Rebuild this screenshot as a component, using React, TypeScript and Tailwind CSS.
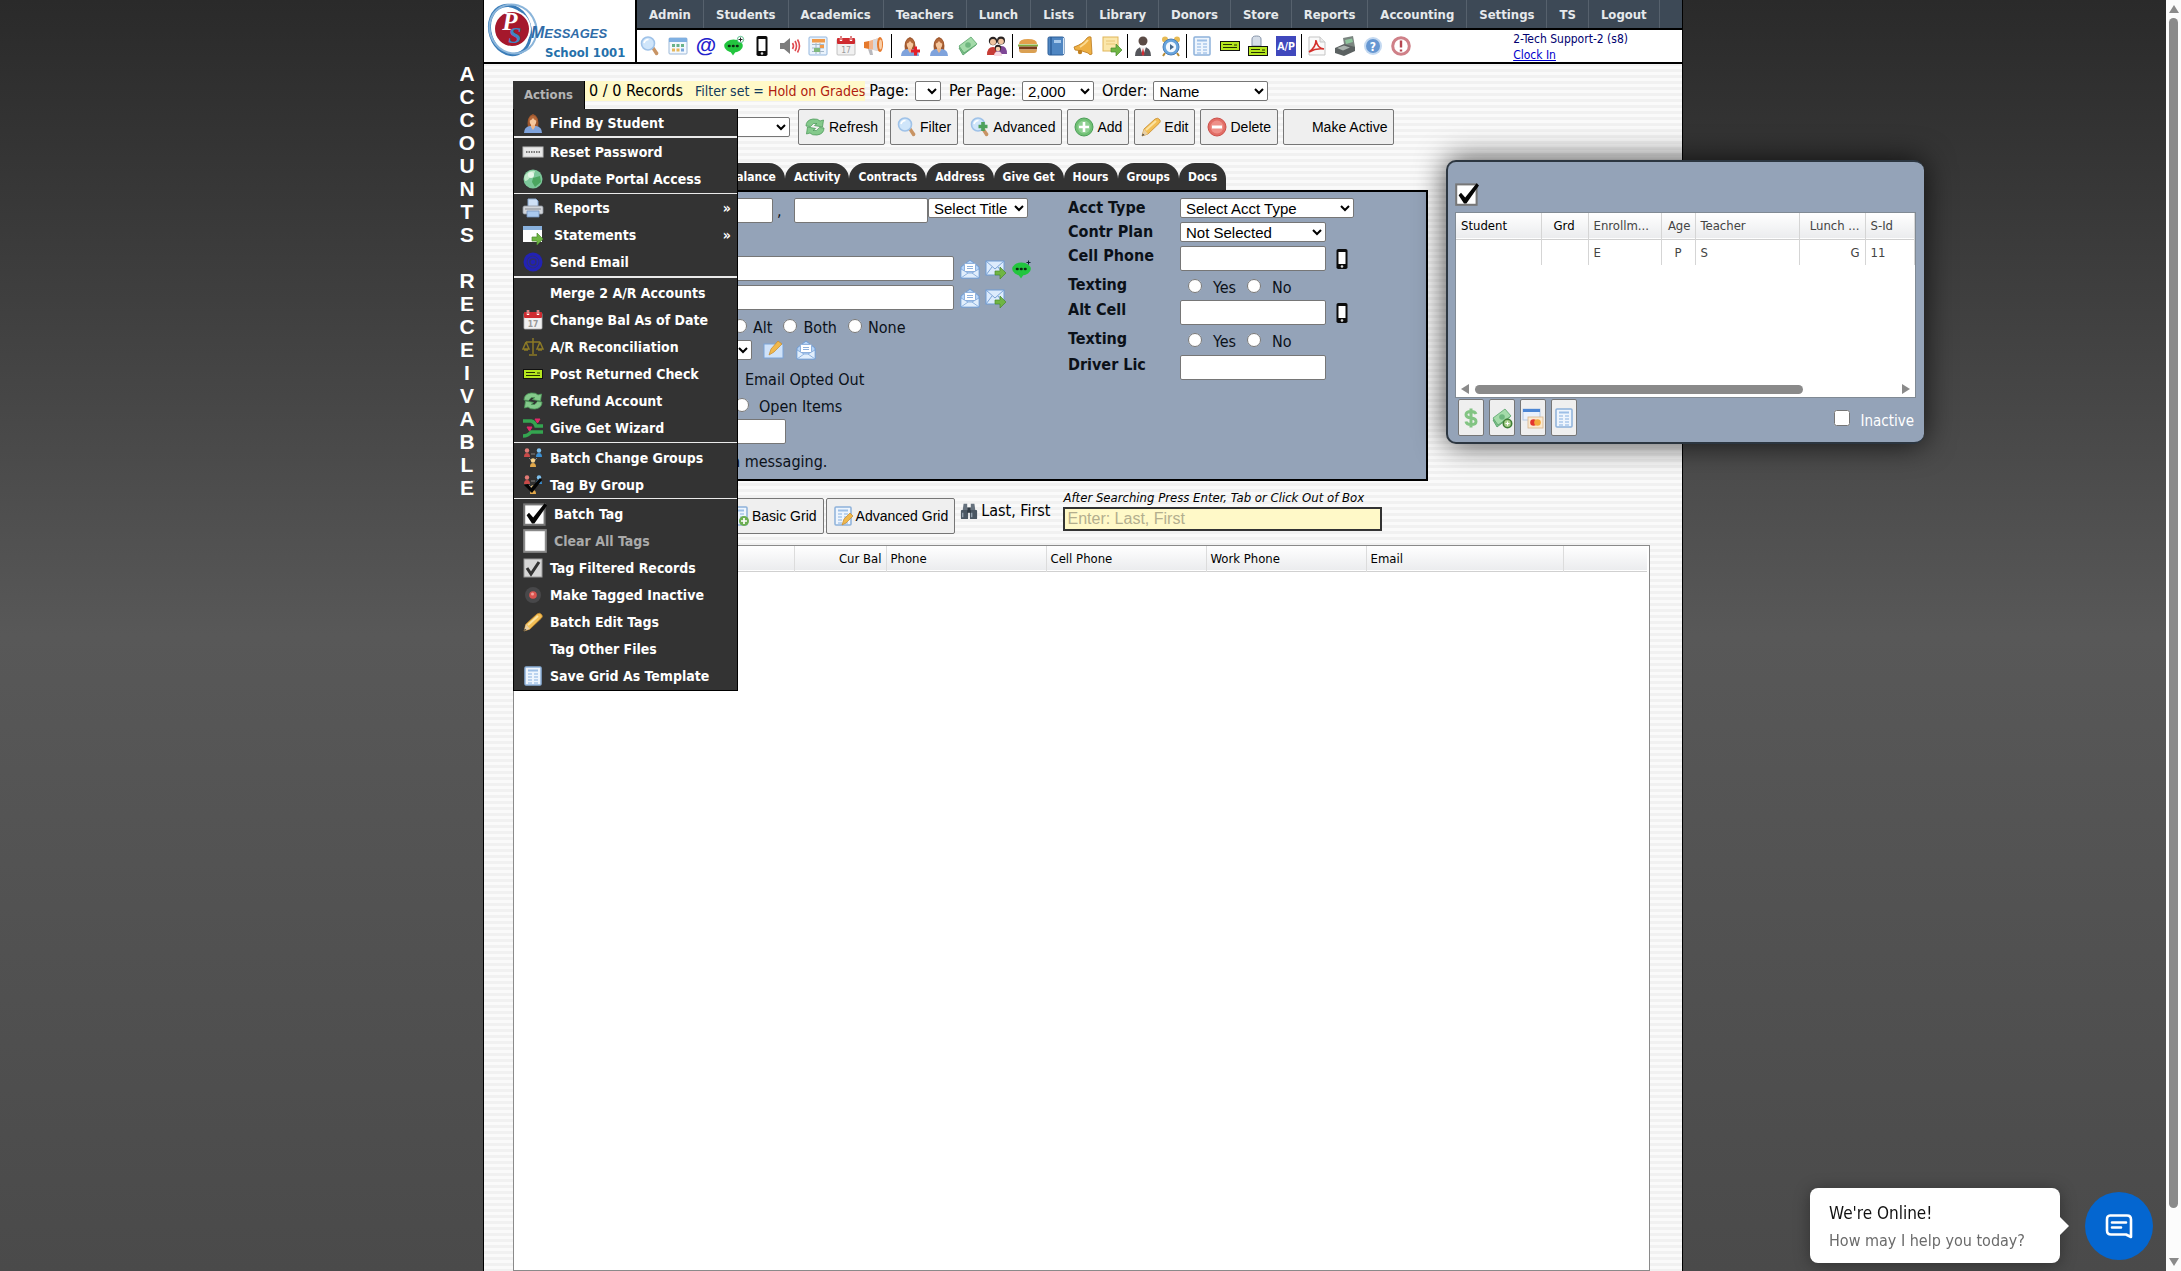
import * as React from "react"
import clsx from "clsx"

const person = (
  <>
    <path d="M5 16Q3 3 10 1Q17 3 15 16Z" fill="#a0582e" />
    <path d="M1 20Q1 14 7 13H13Q19 14 19 20Z" fill="#7fa3dc" />
    <path d="M8 11H12V14L10 17L8 14Z" fill="#f0b88a" />
    <ellipse cx="10" cy="8" rx="3.3" ry="4.2" fill="#f6c79d" />
    <path d="M6 8Q6 3 10 3Q14 3 14 8Q11 7 10 5Q9 7 6 8Z" fill="#b4683a" />
  </>
)

const sheet = (
  <>
    <rect x="2" y="1" width="16" height="18" rx="1" fill="#eef5fd" stroke="#8db1da" strokeWidth="1.5" />
    <path d="M5 4.5H15" stroke="#9dbfe6" strokeWidth="2" />
    <path d="M5 8H9M11 8H15M5 11H9M11 11H15M5 14H9M11 14H15M5 17H9M11 17H15" stroke="#abc8ea" strokeWidth="1.6" />
  </>
)

const calendarGrid = (
  <>
    <rect x="1" y="2" width="18" height="16" rx="1" fill="#f3f8fd" stroke="#9db9d8" />
    <rect x="1" y="2" width="18" height="4" fill="#7fb0e2" />
  </>
)

const arrow = <path d="M9 12H14V8L20 14L14 20V16H9Z" fill="#6fb544" stroke="#4a8a2c" strokeWidth=".7" />

const check = (
  <>
    <rect x="0" y="5" width="20" height="10" fill="#111" />
    <rect x="1" y="6" width="18" height="8" fill="#b4e61e" />
    <path d="M3 8.500H12M3 11.500H17M14 9H17" stroke="#243000" strokeWidth="1.200" />
  </>
)

const envelopeOpen = (
  <>
    <path d="M1 8L10 1L19 8V19H1Z" fill="#b6d3f5" stroke="#6f9bd3" />
    <rect x="4.5" y="4.5" width="11" height="8" rx="1" fill="#fff" stroke="#8fb1dd" />
    <path d="M7 7.5H13M7 9.5H13" stroke="#8fb1dd" />
    <path d="M1 10L8 14H12L19 10V19H1Z" fill="#e1eefc" stroke="#7ba4d8" strokeWidth=".8" />
    <path d="M1 19L8 14M19 19L12 14" stroke="#7ba4d8" strokeWidth=".8" />
  </>
)

const pencil = (
  <>
    <path d="M1 19L3 12L14 2Q17 0 19 3Q20 5 18 6.500L7 17Z" fill="#f3bf55" stroke="#c68a2c" strokeWidth=".8" />
    <path d="M5 13L15 4" stroke="#fbe3a2" strokeWidth="2" />
    <path d="M1 19L3 12L7 17Z" fill="#e8cfa4" />
    <path d="M1 19L1.700 16.500L3.500 18Z" fill="#444" />
  </>
)

const refresh = (
  <>
    <path d="M1 9Q1 3 8 2Q13 1.500 15 4L18.500 3L17.500 10L9.500 8.500L12 6.500Q8 5 5.500 9.500Z" fill="#84c98b" stroke="#4e9c5b" strokeWidth=".8" />
    <path d="M19 11Q19 17 12 18Q7 18.500 5 16L1.500 17L2.500 10L10.500 11.500L8 13.500Q12 15 14.500 10.500Z" fill="#84c98b" stroke="#4e9c5b" strokeWidth=".8" />
  </>
)

const lens = (
  <>
    <path d="M11 12L14 10.500L18.500 17Q18 20 15.500 19Z" fill="#c89464" />
    <circle cx="8" cy="7.500" r="6.500" fill="#cfe5fa" stroke="#9fc2e8" strokeWidth="1.600" />
    <path d="M4 7Q5 3.500 8.500 3.500" stroke="#fff" strokeWidth="1.600" fill="none" />
  </>
)

const calendar17 = (
  <>
    <rect x="1" y="3" width="18" height="16" rx="1" fill="#f1f1f1" stroke="#b5b5b5" strokeWidth=".8" />
    <rect x="1" y="2" width="18" height="6" rx="1" fill="#cf2b30" />
    <path d="M5 0V5M15 0V5" stroke="#fff" strokeWidth="2.400" />
    <path d="M5 0V4M15 0V4" stroke="#c33" strokeWidth="1.200" />
    <text x="10" y="17" fontSize="8.500" textAnchor="middle" fill="#999">17</text>
  </>
)

const money = (
  <>
    <path d="M1 12L14 3L18 9L5 19Z" fill="#7cc08a" stroke="#4f9a62" strokeWidth=".8" />
    <path d="M1 10L13 1L19 8L6 17Z" fill="#a4dba9" stroke="#5aa56c" strokeWidth=".8" />
    <circle cx="10" cy="9" r="2.800" fill="#6fb77f" />
  </>
)

const groups = (
  <>
    <circle cx="4" cy="2.500" r="2.200" fill="#e27b76" />
    <path d="M1 9Q1 5 4 5Q7 5 7 9Z" fill="#c84a48" />
    <circle cx="16" cy="2.500" r="2.200" fill="#7fc1ee" />
    <path d="M13 9Q13 5 16 5Q19 5 19 9Z" fill="#3a8fd2" />
    <circle cx="10" cy="12.500" r="2.200" fill="#f6d28a" />
    <path d="M7 19Q7 15 10 15Q13 15 13 19Z" fill="#e2a84a" />
    <path d="M6 10L8 12M14 10L12 12M8 6H12" stroke="#8a8a8a" strokeWidth=".9" />
  </>
)

const phone = (
  <>
    <rect x="4.500" y="0" width="11" height="20" rx="1.800" fill="#0c0c0c" />
    <rect x="6.500" y="3" width="7" height="12" fill="#fff" />
    <circle cx="10" cy="17.500" r="1.300" fill="#ddd" />
  </>
)

const chat = (
  <>
    <ellipse cx="9.500" cy="10" rx="9.300" ry="6.500" fill="#22c53e" />
    <path d="M6 15L9 19.500L12 15Z" fill="#22c53e" />
    <path d="M5 10H5.500M9 10H9.500M13 10H13.500" stroke="#0b2a10" strokeWidth="2.600" strokeLinecap="round" />
  </>
)

const tick = <path d="M5 9L8.500 13L18 1L20 3L9.500 18H7.500L3 11Z" fill="#050505" />

const icons: Record<string, React.ReactNode> = {
  person,
  sheet,
  check,
  envelopeOpen,
  pencil,
  refresh,
  lens,
  calendar17,
  money,
  groups,
  phone,
  tiles: (
    <>
      {calendarGrid}
      <path d="M4 9.500H7M8.500 9.500H11.500M13 9.500H16" stroke="#68b28a" strokeWidth="3" />
      <path d="M4 14H7M8.500 14H11.500" stroke="#e5b65b" strokeWidth="3" />
      <path d="M13 14H16" stroke="#7ba8dc" strokeWidth="3" />
    </>
  ),
  at: (
    <text x="10" y="16" fontSize="21" fontWeight="700" textAnchor="middle" fill="#2222cc" className="font-['Liberation_Sans',sans-serif]">@</text>
  ),
  chat: (
    <>
      {chat}
      <circle cx="16.500" cy="3.500" r="3.200" fill="#fff" stroke="#2a6" strokeWidth=".7" />
      <path d="M16.500 1.500V5.500M14.500 3.500H18.500" stroke="#222" />
    </>
  ),
  chatPlain: (
    <>
      {chat}
      <path d="M16.500 1.500V5.500M14.500 3.500H18.500" stroke="#123" />
    </>
  ),
  speaker: (
    <>
      <path d="M0 7H4L10 2V18L4 13H0Z" fill="#7d7d7d" />
      <path d="M12.500 7Q14.500 10 12.500 13M15 5Q18 10 15 15M17.500 3.500Q21.500 10 17.500 16.500" stroke="#e04b50" strokeWidth="1.600" fill="none" />
    </>
  ),
  schedule: (
    <>
      <rect x="1" y="1" width="18" height="18" rx="1" fill="#eaf3fc" stroke="#94b7de" />
      <rect x="4" y="3" width="13" height="3.500" fill="#f09a4a" />
      <path d="M4 8.500H16M4 12H16M4 15.500H16M8 7V18M12 7V18" stroke="#a5b8c9" />
      <rect x="12" y="9" width="4" height="3" fill="#f09a4a" />
      <rect x="6" y="12" width="6" height="4" fill="#7fb97d" />
    </>
  ),
  horn: (
    <>
      <path d="M0 6L5 5V13L0 12Z" fill="#e5792c" />
      <path d="M5 5L15 2V15L5 13Z" fill="#f4b48a" />
      <path d="M9 4L14 2.300V15L9 14Z" fill="#d8d8dc" />
      <ellipse cx="16" cy="8.500" rx="3" ry="7.500" fill="#e5792c" />
      <ellipse cx="16.500" cy="8.500" rx="1.500" ry="5" fill="#f9cfa8" />
      <path d="M4 13L6 19H9L8 13.500Z" fill="#b9b9bd" />
    </>
  ),
  personAdd: (
    <>
      {person}
      <path d="M15.500 10.500V19.500M11 15H20" stroke="#e3202a" strokeWidth="3" />
    </>
  ),
  people: (
    <>
      <circle cx="6" cy="5" r="4.200" fill="#2a2322" />
      <circle cx="6" cy="6" r="3" fill="#f0c5a0" />
      <circle cx="14" cy="4.500" r="4" fill="#2a2322" />
      <circle cx="14" cy="5.500" r="2.800" fill="#f0c5a0" />
      <path d="M0 19Q0 11 6 11Q12 11 12 19Z" fill="#c63c35" />
      <path d="M9 18Q9 10 14.500 10Q20 10 20 18Z" fill="#7e4796" />
      <circle cx="11" cy="12" r="3.200" fill="#2a2322" />
      <circle cx="11" cy="13" r="2.300" fill="#f5cfab" />
      <path d="M7 20Q7 15.500 11 15.500Q15 15.500 15 20Z" fill="#f6d9e2" />
    </>
  ),
  burger: (
    <>
      <path d="M1 8Q1 3 10 3Q19 3 19 8Z" fill="#e2a04c" />
      <path d="M0 9.500H20" stroke="#80ad3c" strokeWidth="2" />
      <path d="M1 12H19" stroke="#7a3c1c" strokeWidth="3" />
      <path d="M1 13.500H19Q19 17 16 17H4Q1 17 1 13.500Z" fill="#daa052" />
    </>
  ),
  book: (
    <>
      <rect x="2" y="1" width="16" height="18" rx="1.500" fill="#4f86c2" stroke="#2d5e98" />
      <path d="M5 1V19" stroke="#2d5e98" strokeWidth="1.500" />
      <rect x="8" y="4" width="7" height="3" fill="#a9caec" />
      <path d="M17.500 2V18" stroke="#d7e6f6" />
    </>
  ),
  bell: (
    <>
      <path d="M0 11Q9 8 13 2Q15 0 17 1L18 18Q16 20 14 17Q7 14 1 14Z" fill="#eeb044" stroke="#b9791d" strokeWidth=".8" />
      <path d="M6 11Q11 8 14 4" stroke="#fbdc94" strokeWidth="2" fill="none" />
      <circle cx="6" cy="16" r="2.200" fill="#c2801f" />
    </>
  ),
  note: (
    <>
      <rect x="1" y="1" width="15" height="14" fill="#fbe7ab" stroke="#e0b65a" />
      <path d="M4 5H13M4 8H13" stroke="#e9c677" />
      {arrow}
    </>
  ),
  manager: (
    <>
      <circle cx="10" cy="5" r="4.500" fill="#5b4b45" />
      <path d="M2 20Q2 11 10 11Q18 11 18 20Z" fill="#55565b" />
      <path d="M7 11H13L10 20Z" fill="#f4f4f4" />
      <path d="M10 12L11.500 18L10 20L8.500 18Z" fill="#d22c33" />
    </>
  ),
  clock: (
    <>
      <circle cx="4" cy="3.500" r="3" fill="#e6ba54" />
      <circle cx="16" cy="3.500" r="3" fill="#e6ba54" />
      <path d="M4 17L2 20M16 17L18 20" stroke="#b58a34" strokeWidth="2" />
      <circle cx="10" cy="11" r="8" fill="#68a4dd" stroke="#4a7fb8" />
      <circle cx="10" cy="11" r="5.200" fill="#f2f8fe" />
      <path d="M9 8V14L13 11Z" fill="#47698c" />
    </>
  ),
  checkPrint: (
    <>
      <path d="M4 10V3Q4 0 8.500 0Q13 0 13 3V10Z" fill="#d5dde8" stroke="#8593a8" />
      <rect x="0" y="10" width="20" height="10" fill="#111" />
      <rect x="1" y="11" width="18" height="8" fill="#b4e61e" />
      <path d="M3 13.500H12M3 16.500H17M14 14H17" stroke="#243000" strokeWidth="1.200" />
    </>
  ),
  ap: (
    <>
      <rect x="0" y="0" width="20" height="20" fill="#4048bd" />
      <text x="10" y="14" fontSize="10.500" fontWeight="700" textAnchor="middle" fill="#fff">A/P</text>
    </>
  ),
  pdf: (
    <>
      <path d="M2 1H13L18 6V19H2Z" fill="#fafafa" stroke="#c5c5c5" />
      <path d="M13 1V6H18" fill="#ececec" stroke="#c5c5c5" />
      <path d="M2 16Q9 11 9 4M9 4Q10 12 17 13Q9 12 2 16" stroke="#d4302c" strokeWidth="1.600" fill="none" />
    </>
  ),
  register: (
    <>
      <path d="M8 2L18 0L20 11L10 14Z" fill="#7b8580" />
      <path d="M10 4L17 2.500L18 6L11 8Z" fill="#8fc59d" />
      <path d="M0 12L9 8L20 11V15L9 20L0 17Z" fill="#5b6161" />
      <path d="M2 12L9 9.500L15 11.500L8 14.500Z" fill="#aab3ae" />
    </>
  ),
  help: (
    <>
      <circle cx="10" cy="10" r="9" fill="#c4d9f1" />
      <circle cx="10" cy="10" r="7" fill="#6697d2" />
      <text x="10" y="14.500" fontSize="12" fontWeight="700" textAnchor="middle" fill="#fff">?</text>
    </>
  ),
  alert: (
    <>
      <circle cx="10" cy="10" r="8.300" fill="#fff" stroke="#cf8088" strokeWidth="3" />
      <path d="M10 4.500V11.500M10 13.500V15.500" stroke="#b64651" strokeWidth="2.400" />
    </>
  ),
  lensAdd: (
    <>
      {lens}
      <path d="M13 5V14M8.500 9.500H17.500" stroke="#4ea05a" strokeWidth="3.600" />
    </>
  ),
  add: (
    <>
      <circle cx="10" cy="10" r="9" fill="#6fbf73" stroke="#4b9e57" />
      <circle cx="10" cy="10" r="6.500" fill="#8fd092" />
      <path d="M10 5V15M5 10H15" stroke="#fff" strokeWidth="2.600" />
    </>
  ),
  remove: (
    <>
      <circle cx="10" cy="10" r="9" fill="#e26d66" stroke="#cc4f49" />
      <circle cx="10" cy="10" r="6.500" fill="#ee8f88" />
      <path d="M5 10H15" stroke="#fff" strokeWidth="3" />
    </>
  ),
  password: (
    <>
      <rect x="0" y="5" width="20" height="10" fill="#e8e8e8" stroke="#bdbdbd" />
      <path d="M3 10H17" stroke="#555" strokeWidth="1.600" strokeDasharray="1.500 1" />
    </>
  ),
  globe: (
    <>
      <circle cx="10" cy="10" r="9.500" fill="#7cc79a" />
      <path d="M3 5Q7 1 12 2Q11 7 7 8Q5 12 2 12Q0 8 3 5Z" fill="#bfe8c8" />
      <path d="M10 9L17 7L18 13L12 18L9 13Z" fill="#4ba55f" />
      <circle cx="8" cy="6" r="3" fill="#e5f7e8" />
    </>
  ),
  printer: (
    <>
      <path d="M5 9V1H13L15 3V9Z" fill="#cfe0f5" stroke="#8aa8cf" />
      <rect x="0" y="8" width="20" height="8" rx="1.500" fill="#d2d5da" stroke="#8f959e" strokeWidth=".8" />
      <path d="M2 11H18" stroke="#868b92" />
      <path d="M4 13H16V19H4Z" fill="#a9c8ee" stroke="#7393bd" strokeWidth=".8" />
    </>
  ),
  statement: (
    <>
      <rect x="0" y="1" width="19" height="16" fill="#fff" />
      <rect x="0" y="1" width="19" height="4" fill="#88b0dc" />
      {arrow}
    </>
  ),
  ring: (
    <>
      <circle cx="10" cy="10" r="9.500" fill="#2222b4" />
      <circle cx="10" cy="10" r="6" fill="none" stroke="#30306c" strokeWidth=".9" />
      <circle cx="10" cy="10" r="3" fill="none" stroke="#30306c" strokeWidth="1.300" />
    </>
  ),
  scales: (
    <path d="M10 1V17M3 5H17M3 5L0 12H6L3 5M17 5L14 12H20L17 5M6 18H14M1 13H5M15 13H19" stroke="#8c7a26" strokeWidth="1.500" fill="none" />
  ),
  giveGet: (
    <>
      <path d="M0 3H8Q12 4 13 8H20" stroke="#34a550" strokeWidth="3.500" fill="none" />
      <path d="M0 18Q5 18 8 14H20" stroke="#34a550" strokeWidth="3.500" fill="none" />
      <path d="M12 1L14.500 5L17 1Z" fill="#e02a68" stroke="#e02a68" />
      <path d="M4 9L6.500 13L9 9Z" fill="#e02a68" stroke="#e02a68" />
    </>
  ),
  tagGroup: (
    <>
      {groups}
      <path d="M1 10L5 9L8 13L17 3L19 5L9 18Z" fill="#050505" />
    </>
  ),
  boxChecked: (
    <>
      <rect x="1" y="2" width="17" height="17" fill="#fff" stroke="#777" strokeWidth="1.700" />
      {tick}
    </>
  ),
  box: <rect x="1" y="1" width="18" height="18" fill="#fff" stroke="#8a8a8a" strokeWidth="1.700" />,
  boxGray: (
    <>
      <rect x="1" y="1" width="18" height="18" fill="#d7d7d7" stroke="#999" />
      <path d="M4 10L8 16L16 4" stroke="#333" strokeWidth="3" fill="none" />
    </>
  ),
  dot: (
    <>
      <circle cx="10" cy="10" r="8" fill="#48484a" />
      <circle cx="10" cy="10" r="3.800" fill="#d9534f" />
      <circle cx="9.500" cy="9" r="1.500" fill="#f2a09a" />
    </>
  ),
  envelopeSend: (
    <>
      <rect x="0" y="2" width="18" height="14" fill="#dcebfc" stroke="#6f9bd3" />
      <path d="M0 2L9 10L18 2M0 16L6 8M18 16L12 8" stroke="#7ba4d8" fill="none" />
      {arrow}
    </>
  ),
  envelopeEdit: (
    <>
      <rect x="0" y="4" width="19" height="14" fill="#cfe2f9" stroke="#7ba4d8" />
      <path d="M5 15L7 9L14 1L18 4L10 12Z" fill="#f0b84c" stroke="#c68a2c" strokeWidth=".7" />
    </>
  ),
  sheetAdd: (
    <>
      {sheet}
      <circle cx="15" cy="15" r="5" fill="#6cae52" />
      <path d="M15 12V18M12 15H18" stroke="#fff" strokeWidth="1.700" />
    </>
  ),
  sheetEdit: (
    <>
      {sheet}
      <path d="M9 19L11 13L17 7L20 10L13 17Z" fill="#f0b84c" stroke="#c68a2c" strokeWidth=".7" />
    </>
  ),
  binoculars: (
    <>
      <rect x="1" y="9" width="8" height="10" rx="1" fill="#4b5763" />
      <rect x="11" y="9" width="8" height="10" rx="1" fill="#4b5763" />
      <path d="M3 9L4 2H8V9ZM12 9V2H16L17 9Z" fill="#67737f" />
      <rect x="8" y="6" width="4" height="6" fill="#303a44" />
      <path d="M3 12V17M13 12V17" stroke="#97a4b1" strokeWidth="1.500" />
    </>
  ),
  dollar: (
    <path d="M15 6Q14 3.500 10 3.500Q5 3.500 5 6.800Q5 9.500 10 10Q15 10.500 15 13.500Q15 16.500 10 16.500Q5.500 16.500 5 13.500M10 .5V19.500" stroke="#82c483" strokeWidth="3" fill="none" />
  ),
  moneyAdd: (
    <>
      {money}
      <circle cx="15.500" cy="15.500" r="4.200" fill="#a8cf8a" stroke="#3f7f35" strokeWidth="1.600" />
      <path d="M15.500 13.500V17.500M13.500 15.500H17.500" stroke="#fff" />
    </>
  ),
  cards: (
    <>
      <rect x="0" y="1" width="17" height="11" fill="#eaf1fb" stroke="#a9c0e2" strokeWidth=".8" />
      <rect x="0" y="1" width="17" height="3" fill="#4c86d4" />
      <rect x="5" y="9" width="15" height="11" fill="#fbe9cf" stroke="#d8b48c" strokeWidth=".8" />
      <circle cx="10.500" cy="14.500" r="3.300" fill="#e3342f" />
      <circle cx="14.500" cy="14.500" r="3.300" fill="#f3a93c" />
    </>
  ),
}

function Icon({ name, className = "size-5" }: { name: string; className?: string }) {
  return (
    <svg viewBox="0 0 20 20" className={clsx("shrink-0 overflow-visible", className)} aria-hidden="true">
      {icons[name]}
    </svg>
  )
}

const nav = ["Admin", "Students", "Academics", "Teachers", "Lunch", "Lists", "Library", "Donors", "Store", "Reports", "Accounting", "Settings", "TS", "Logout"]

const toolbar = [
  { className: "gap-2 pr-[7px] pl-[3px]", names: ["lens", "tiles", "at", "chat", "phone", "speaker", "schedule", "calendar17", "horn"] },
  { className: "gap-[9px] border-l pr-[5px] pl-2", names: ["personAdd", "person", "money", "people"] },
  { className: "gap-2 border-l px-[5px]", names: ["burger", "book", "bell", "note"] },
  { className: "gap-2 border-l px-[5px]", names: ["manager", "clock"] },
  { className: "gap-2 border-l px-[5px]", names: ["sheet", "check", "checkPrint", "ap"] },
  { className: "gap-2 border-l px-[5px]", names: ["pdf", "register", "help", "alert"] },
]

type MenuItem = { label: string; icon?: string; sub?: boolean; big?: boolean; muted?: boolean }

const menu: { className: string; items: MenuItem[] }[] = [
  { className: "border-b-2", items: [{ label: "Find By Student", icon: "person" }] },
  {
    className: "border-b pb-px",
    items: [
      { label: "Reset Password", icon: "password" },
      { label: "Update Portal Access", icon: "globe" },
    ],
  },
  {
    className: "border-b-2 pb-px",
    items: [
      { label: "Reports", icon: "printer", sub: true },
      { label: "Statements", icon: "statement", sub: true },
      { label: "Send Email", icon: "ring" },
    ],
  },
  {
    className: "border-b py-px",
    items: [
      { label: "Merge 2 A/R Accounts" },
      { label: "Change Bal As of Date", icon: "calendar17" },
      { label: "A/R Reconciliation", icon: "scales" },
      { label: "Post Returned Check", icon: "check" },
      { label: "Refund Account", icon: "refresh" },
      { label: "Give Get Wizard", icon: "giveGet" },
    ],
  },
  {
    className: "border-b pt-px",
    items: [
      { label: "Batch Change Groups", icon: "groups" },
      { label: "Tag By Group", icon: "tagGroup" },
    ],
  },
  {
    className: "py-px",
    items: [
      { label: "Batch Tag", icon: "boxChecked", big: true },
      { label: "Clear All Tags", icon: "box", big: true, muted: true },
      { label: "Tag Filtered Records", icon: "boxGray" },
      { label: "Make Tagged Inactive", icon: "dot" },
      { label: "Batch Edit Tags", icon: "pencil" },
      { label: "Tag Other Files" },
      { label: "Save Grid As Template", icon: "sheet" },
    ],
  },
]

const tabs = ["Balance", "Activity", "Contracts", "Address", "Give Get", "Hours", "Groups", "Docs"]

const arial = "font-['Liberation_Sans',Arial,sans-serif]"
const field = "h-[25px] rounded-xs border border-[#767676] bg-white px-1"
const select = clsx("h-5 rounded-xs border border-[#767676] bg-white px-px text-[15px] leading-4 text-black", arial)
const button = clsx("flex h-9 shrink-0 items-center rounded-xs border border-[#767676] bg-[#efefef] px-1.5 text-sm whitespace-nowrap text-black", arial)

function Select({ label, value, className }: { label: string; value?: string; className: string }) {
  return (
    <select aria-label={label} className={clsx(select, className)}>
      {value ? <option>{value}</option> : null}
    </select>
  )
}

function IconButton({ name, label, className }: { name: string; label: string; className?: string }) {
  return (
    <button type="button" aria-label={label}>
      <Icon name={name} className={className} />
    </button>
  )
}

function Header() {
  return (
    <header className="flex h-16 border-b-2 border-black bg-white">
      <a href="#" className="block w-[153px] shrink-0 border-r-2 border-black">
        <svg viewBox="0 0 151 62" className="h-[62px] w-full" aria-label="PS Messages">
          <ellipse cx="26" cy="30" rx="20" ry="25" fill="none" stroke="#3a7cb8" strokeWidth="3" transform="rotate(-18 26 30)" />
          <ellipse cx="29" cy="29" rx="23" ry="25" fill="none" stroke="#8bb5da" strokeWidth="2" transform="rotate(-30 29 29)" />
          <circle cx="28" cy="29" r="19" fill="#fff" />
          <circle cx="28" cy="29" r="17" fill="#a5182c" />
          <text x="26" y="30" fontSize="25" fontWeight="700" fontStyle="italic" textAnchor="middle" fill="#fff" className="font-['Liberation_Serif',serif]">P</text>
          <text x="31" y="43" fontSize="24" fontWeight="700" fontStyle="italic" textAnchor="middle" fill="#3f86c4" className="font-['Liberation_Serif',serif]">S</text>
          <text x="47" y="38" fontSize="16" fontWeight="700" fontStyle="italic" fill="#2f6ca8" className="font-['Liberation_Sans',sans-serif]">
            M<tspan fontSize="13">ESSAGES</tspan>
          </text>
          <text x="61" y="57" fontSize="13" fontWeight="700" fill="#2570aa">School 1001</text>
        </svg>
      </a>
      <div className="min-w-0 flex-1">
        <nav className="flex h-[30px] border-b-2 border-black bg-[#3d4956] text-[13px] leading-[29px] font-bold text-[#e6e9ec]">
          {nav.map((item) => (
            <a key={item} href="#" className="border-r border-[#56616d] px-3">
              {item}
            </a>
          ))}
        </nav>
        <div className="flex h-8 items-center">
          {toolbar.map((group, i) => (
            <div key={i} className={clsx("flex h-6 items-center border-black", group.className)}>
              {group.names.map((name) => (
                <IconButton key={name} name={name} label={name} />
              ))}
            </div>
          ))}
          <div className="mr-[54px] ml-auto pt-0.5 text-xs leading-4 text-[#000070]">
            <div>2-Tech Support-2 (s8)</div>
            <a href="#" className="text-[#0000cc] underline">Clock In</a>
          </div>
        </div>
      </div>
    </header>
  )
}

function ActionsMenu() {
  return (
    <ul className="absolute top-full left-0 z-10 w-[225px] border-x border-b border-black bg-[#333] text-sm font-bold text-white">
      {menu.map((group, i) => (
        <li key={i} className={clsx("border-white/90", group.className)}>
          {group.items.map((item) => (
            <button
              key={item.label}
              type="button"
              className={clsx("flex h-[27px] w-full items-center gap-[7px] pr-1.5 pl-[9px] text-left whitespace-nowrap", item.muted && "text-[#aaa]")}
            >
              {item.icon ? <Icon name={item.icon} className={item.big ? "size-6" : "size-5"} /> : <span className="w-5" />}
              <span className={clsx("flex-1", item.sub && "pl-1")}>{item.label}</span>
              {item.sub && <span>»</span>}
            </button>
          ))}
        </li>
      ))}
    </ul>
  )
}

function RecordBar() {
  return (
    <div className="flex h-7 items-start">
      <div className="relative h-7 w-[72px] bg-[#333]">
        <button type="button" className="h-7 w-full border-r border-black text-[13px] font-bold text-[#b5b5b5]">
          Actions
        </button>
        <ActionsMenu />
      </div>
      <div className="flex h-5 items-center bg-[#fff9c8] pl-1 text-base whitespace-nowrap">
        0 / 0 Records
        <span className="ml-3 text-sm text-[#123a5c]">Filter set =&nbsp;</span>
        <span className="text-sm text-[#b01c10]">Hold on Grades</span>
      </div>
      <div className="flex h-5 items-center gap-1.5 pl-1 text-base whitespace-nowrap">
        <span>Page:</span>
        <Select label="Page" className="mr-0.5 w-[26px]" />
        <span>Per Page:</span>
        <Select label="Per Page" value="2,000" className="mr-0.5 w-[72px]" />
        <span>Order:</span>
        <Select label="Order" value="Name" className="w-[115px]" />
      </div>
    </div>
  )
}

function CommandBar() {
  return (
    <div className="flex h-9 items-center gap-[5px] pl-[185px]">
      <Select label="View" className="mr-[3px] w-[92px]" />
      <button type="button" className={clsx(button, "gap-1")}><Icon name="refresh" />Refresh</button>
      <button type="button" className={clsx(button, "gap-[3px]")}><Icon name="lens" />Filter</button>
      <button type="button" className={clsx(button, "gap-[3px]")}><Icon name="lensAdd" />Advanced</button>
      <button type="button" className={clsx(button, "gap-[3px]")}><Icon name="add" />Add</button>
      <button type="button" className={clsx(button, "gap-[3px]")}><Icon name="pencil" />Edit</button>
      <button type="button" className={clsx(button, "gap-[3px]")}><Icon name="remove" />Delete</button>
      <button type="button" className={clsx(button, "pl-7")}>Make Active</button>
    </div>
  )
}

function Radio({ name, label, className = "gap-1.5" }: { name: string; label: string; className?: string }) {
  return (
    <label className={clsx("flex items-center", className)}>
      <input type="radio" name={name} className="mb-1 size-3.5" />
      {label}
    </label>
  )
}

function AccountForm() {
  return (
    <form className="mr-[254px] grid grid-cols-[553px_1fr] border-2 border-black bg-[#94a3b8] pt-[6px] pb-1 text-base text-[#0b1118]">
      <div className="flex flex-col pl-[185px]">
        <div className="mb-[33px] flex h-[25px] items-start">
          <input aria-label="Last name" className={clsx(field, "w-[73px]")} />
          <span className="w-[21px] self-end pl-1">,</span>
          <input aria-label="First name" className={clsx(field, "w-[134px]")} />
          <Select label="Title" value="Select Title" className="w-[100px]" />
        </div>
        <div className="mb-1 flex items-center gap-1.5">
          <input aria-label="Email" className={clsx(field, "w-[254px]")} />
          <IconButton name="envelopeOpen" label="Open email" />
          <IconButton name="envelopeSend" label="Send email" />
          <IconButton name="chatPlain" label="Text" />
        </div>
        <div className="flex items-center gap-1.5">
          <input aria-label="Alternate email" className={clsx(field, "w-[254px]")} />
          <IconButton name="envelopeOpen" label="Open alternate email" />
          <IconButton name="envelopeSend" label="Send alternate email" />
        </div>
        <div className="flex h-[30px] items-end gap-[11px] pl-[33px]">
          <Radio name="send" label="Alt" />
          <Radio name="send" label="Both" />
          <Radio name="send" label="None" />
        </div>
        <div className="flex h-5 items-center gap-3">
          <Select label="Email format" className="w-[52px]" />
          <IconButton name="envelopeEdit" label="Edit message" />
          <IconButton name="envelopeOpen" label="Open message" />
        </div>
        <div className="mt-[6px] flex h-7 items-center pl-[45px]">Email Opted Out</div>
        <div className="flex h-[25px] items-center pl-[35px]">
          <Radio name="items" label="Open Items" className="gap-2.5" />
        </div>
        <input aria-label="Reference" className={clsx(field, "w-[86px]")} />
        <div className="mt-[5px] flex h-[26px] items-center pl-[31px]">n messaging.</div>
      </div>
      <div className="grid grid-cols-[112px_1fr] content-start font-normal">
        <b className="h-[23px] leading-5">Acct Type</b>
        <div><Select label="Acct Type" value="Select Acct Type" className="w-[174px] align-top" /></div>
        <b className="h-6 leading-5">Contr Plan</b>
        <div><Select label="Contr Plan" value="Not Selected" className="w-[146px] align-top" /></div>
        <label htmlFor="cell" className="leading-5 font-bold">Cell Phone</label>
        <div className="flex items-center gap-1.5">
          <input id="cell" className={clsx(field, "w-[146px]")} />
          <IconButton name="phone" label="Call cell" />
        </div>
        <b className="leading-7">Texting</b>
        <div className="flex h-[29px] items-center gap-[11px] pt-1 pl-2">
          <Radio name="texting" label="Yes" className="gap-[11px]" />
          <Radio name="texting" label="No" className="gap-[11px]" />
        </div>
        <label htmlFor="alt" className="leading-5 font-bold">Alt Cell</label>
        <div className="flex items-center gap-1.5">
          <input id="alt" className={clsx(field, "w-[146px]")} />
          <IconButton name="phone" label="Call alt cell" />
        </div>
        <b className="leading-7">Texting</b>
        <div className="flex h-[30px] items-center gap-[11px] pt-1 pl-2">
          <Radio name="altTexting" label="Yes" className="gap-[11px]" />
          <Radio name="altTexting" label="No" className="gap-[11px]" />
        </div>
        <label htmlFor="lic" className="leading-5 font-bold">Driver Lic</label>
        <input id="lic" className={clsx(field, "w-[146px]")} />
      </div>
    </form>
  )
}

function SearchBar() {
  return (
    <div className="mt-[6px] flex h-[58px] items-start">
      <div className="flex gap-0.5 pt-[11px] pl-[209px]">
        <button type="button" className={clsx(button, "gap-[3px]")}><Icon name="sheetAdd" />Basic Grid</button>
        <button type="button" className={clsx(button, "gap-[3px]")}><Icon name="sheetEdit" />Advanced Grid</button>
      </div>
      <label htmlFor="search" className="flex items-center gap-[3px] px-[5px] pt-3 text-base whitespace-nowrap">
        <Icon name="binoculars" className="size-[18px]" />
        Last, First
      </label>
      <div className="ml-2 w-[319px] pt-px">
        <div className="h-[19px] text-[13px] leading-[19px] whitespace-nowrap italic">After Searching Press Enter, Tab or Click Out of Box</div>
        <input
          id="search"
          placeholder="Enter: Last, First"
          className={clsx("h-6 w-full border-2 border-[#333] bg-[#fff9c8] px-0.5 text-base placeholder:text-[#b3ae8e]", arial)}
        />
      </div>
    </div>
  )
}

const accountColumns = [
  { label: "", className: "w-[280px]" },
  { label: "Cur Bal", className: "w-[92px] text-right!" },
  { label: "Phone", className: "w-[160px]" },
  { label: "Cell Phone", className: "w-[160px]" },
  { label: "Work Phone", className: "w-[160px]" },
  { label: "Email", className: "w-[197px]" },
  { label: "", className: "" },
]

function AccountGrid() {
  return (
    <div className="mr-8 flex-1 border border-[#8a8a8a] bg-white pr-0.5">
      <table className="w-full table-fixed border-collapse text-[13px]">
        <thead>
          <tr className="h-[25px] border-b border-[#d0d0d0] bg-linear-to-b from-white to-[#ebecee]">
            {accountColumns.map((col, i) => (
              <th key={i} className={clsx("border-r border-[#dcdcdc] px-1 text-left font-normal last:border-0", col.className)}>
                {col.label}
              </th>
            ))}
          </tr>
        </thead>
      </table>
    </div>
  )
}

const studentColumns = [
  { label: "Student", value: "", className: "w-[85px]", head: "text-black" },
  { label: "Grd", value: "", className: "w-[47px] text-center", head: "pl-3 text-black" },
  { label: "Enrollm...", value: "E", className: "w-[73px]" },
  { label: "Age", value: "P", className: "w-[34px] text-center" },
  { label: "Teacher", value: "S", className: "w-[104px]" },
  { label: "Lunch ...", value: "G", className: "w-[66px] text-right" },
  { label: "S-Id", value: "11", className: "" },
]

function StudentWindow() {
  return (
    <section className="absolute top-40 left-[962px] z-20 flex h-[284px] w-[478px] flex-col rounded-[10px] border-2 border-r-0 border-[#2c3640] bg-[#94a3b8] pt-5 pr-2 pl-[7px] shadow-[0_0_30px_rgba(0,0,0,0.75)]">
      <button type="button" aria-label="Tag student" className="mb-[6px] w-6">
        <Icon name="boxChecked" className="size-6" />
      </button>
      <div className="flex h-[186px] flex-col justify-between border border-[#808a94] bg-white">
        <table className="w-full table-fixed border-collapse text-[13px] text-[#444]">
          <thead>
            <tr className="h-[26px] border-b border-[#d0d0d0] bg-linear-to-b from-white to-[#ebecee]">
              {studentColumns.map((col) => (
                <th key={col.label} className={clsx("overflow-hidden border-r border-[#d5d5d5] px-[5px] text-left font-normal whitespace-nowrap", col.className, col.head, col.label === "Age" && "px-1! text-right!")}>
                  {col.label}
                </th>
              ))}
            </tr>
          </thead>
          <tbody>
            <tr className="h-[26px]">
              {studentColumns.map((col) => (
                <td key={col.label} className={clsx("border-r border-[#d5d5d5] px-[5px]", col.className)}>
                  {col.value}
                </td>
              ))}
            </tr>
          </tbody>
        </table>
        <div className="flex h-4 items-center gap-1.5 px-[5px]">
          <svg viewBox="0 0 8 10" className="h-2.5 w-2"><path d="M8 0V10L0 5Z" fill="#8a8a8a" /></svg>
          <div className="flex-1"><div className="h-[9px] w-[78%] rounded-full bg-[#8a8a8a]" /></div>
          <svg viewBox="0 0 8 10" className="h-2.5 w-2"><path d="M0 0V10L8 5Z" fill="#8a8a8a" /></svg>
        </div>
      </div>
      <div className="flex items-center gap-[5px] pt-px pl-[3px]">
        {["dollar", "moneyAdd", "cards", "sheet"].map((name) => (
          <button key={name} type="button" aria-label={name} className="flex h-[37px] w-[26px] items-center justify-center rounded-xs border border-[#767676] bg-[#efefef]">
            <Icon name={name} />
          </button>
        ))}
        <label className="ml-auto flex items-center gap-2.5 pt-2 pr-0.5 text-[15px] text-white">
          <input type="checkbox" className="mb-2 size-4" />
          Inactive
        </label>
      </div>
    </section>
  )
}

function ChatWidget() {
  return (
    <div className="fixed right-7 bottom-2 z-30 flex items-center">
      <div className="w-[250px] rounded-lg bg-white px-[19px] pt-[11px] pb-2 whitespace-nowrap shadow-[0_2px_16px_rgba(0,0,0,0.35)]">
        <div className="text-[17px] leading-7 text-[#111]">We're Online!</div>
        <div className="text-base leading-7 text-[#6b6b6b]">How may I help you today?</div>
      </div>
      <svg viewBox="0 0 9 18" className="mr-4 h-[18px] w-[9px]"><path d="M0 0L9 9L0 18Z" fill="#fff" /></svg>
      <button type="button" aria-label="Chat" className="flex size-[68px] items-center justify-center rounded-full bg-[#0466d0]">
        <svg viewBox="0 0 28 26" className="h-[26px] w-7" fill="none" stroke="#fff" strokeWidth="2.600" strokeLinejoin="round">
          <path d="M5 2.500H22Q26 2.500 26 6.500V24L21 21.500H6Q2 21.500 2 17.500V6.500Q2 2.500 5 2.500Z" />
          <path d="M7 9.500H21M7 14.500H16" strokeLinecap="round" />
        </svg>
      </button>
    </div>
  )
}

function PageScrollbar() {
  return (
    <div className="flex w-[15px] shrink-0 flex-col items-center bg-[#fcfcfc] py-[5px]">
      <svg viewBox="0 0 10 8" className="h-2 w-2.5"><path d="M5 0L10 8H0Z" fill="#8a8a8a" /></svg>
      <div className="w-full flex-1 px-[3px] pt-[5px]">
        <div className="h-[96%] rounded-full bg-[#8a8a8a]" />
      </div>
      <svg viewBox="0 0 10 8" className="h-2 w-2.5"><path d="M5 8L10 0H0Z" fill="#8a8a8a" /></svg>
    </div>
  )
}

export default function App() {
  return (
    <div className="flex h-screen overflow-hidden bg-linear-to-b from-[#2a2a2a] via-[#585858] to-[#4a4a4a] font-['DejaVu_Sans_Condensed','Noto_Sans',sans-serif] text-black">
      <div className="flex flex-1">
        <aside className={clsx("flex-1 pt-[62px] text-[21px] leading-[23px] font-bold text-white", arial)}>
          <div className="mr-2 ml-auto flex w-4 flex-col items-center">
            {"ACCOUNTS RECEIVABLE".split("").map((letter, i) => (
              <span key={i} className="h-[23px]">{letter}</span>
            ))}
          </div>
        </aside>
        <main className="relative flex w-full max-w-[1200px] flex-col border-x border-black bg-[repeating-linear-gradient(to_bottom,#fafafa_0px,#fafafa_3px,#f1f1f1_3px,#f1f1f1_6px)]">
          <Header />
          <div className="flex flex-1 flex-col pt-[17px] pl-[29px]">
            <RecordBar />
            <CommandBar />
            <div className="mt-[18px] flex h-[27px] pl-[206px] text-xs font-bold text-white">
              {tabs.map((tab) => (
                <button key={tab} type="button" className="rounded-t-2xl bg-[#333] px-[9px]">
                  {tab}
                </button>
              ))}
            </div>
            <AccountForm />
            <SearchBar />
            <AccountGrid />
          </div>
          <StudentWindow />
        </main>
        <div className="flex-1" />
      </div>
      <PageScrollbar />
      <ChatWidget />
    </div>
  )
}
